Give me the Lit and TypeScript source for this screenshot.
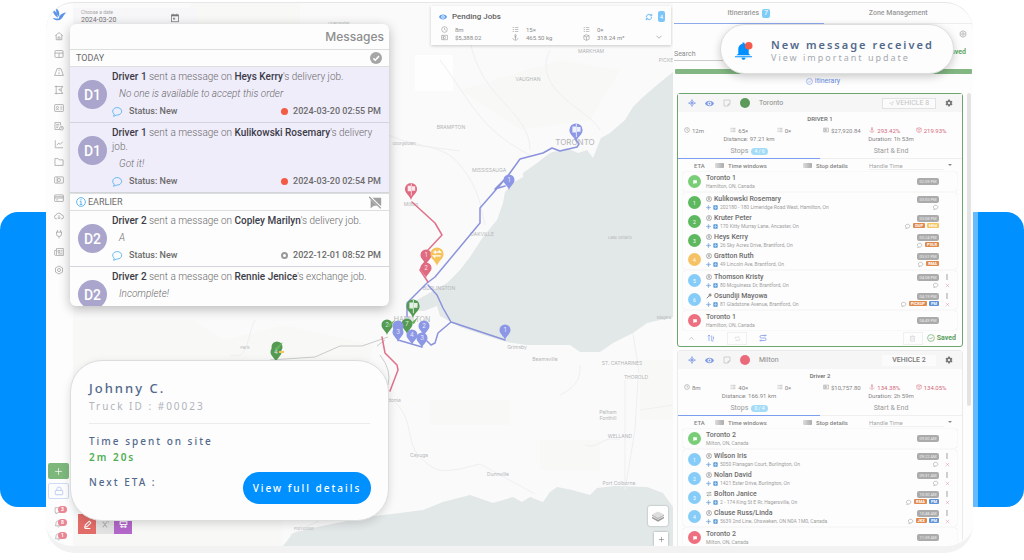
import { LitElement, html, css, svg, nothing } from "lit";
import { customElement, property } from "lit/decorators.js";
import { styleMap } from "lit/directives/style-map.js";

const ICONS: Record<string, unknown> = {
  home: svg`<path d="M2 7.5 8 2.5l6 5M3.500 6.500V14h9V6.500M6.500 14V9.500h3V14"/>`,
  table: svg`<rect x="1.5" y="2.5" width="13" height="11" rx="1.5"/><path d="M1.5 6.5h13M8 6.5v7"/>`,
  road: svg`<path d="M5 2.5h6l4 11H1zM8 4.5v2M8 8.5v3"/>`,
  flagBox: svg`<path d="M3.500 1v14M1 2.500h13.500l-3 2.500v6l3 2.500H1M11.500 8h-4l2-2.500"/>`,
  card: svg`<rect x="1" y="2.5" width="14" height="11" rx="1"/><circle cx="5.5" cy="7" r="1.7"/><path d="M3 11.5c.4-2 4.600-2 5 0M10 6.500h3M10 9.500h3"/>`,
  list: svg`<path d="M10 13.500H1.500v-11h9V7M3.500 5.500h5M3.500 8h4M3.500 10.500h3"/><circle cx="12" cy="11.500" r="3"/><path d="M12 10v1.500h1.500"/>`,
  chart: svg`<path d="M2 2v12h12.500M4.500 10l3-3.500 2.500 2 4-4"/>`,
  folder: svg`<path d="M1.500 13.500v-11h5l1.500 2h6.500v9z"/>`,
  money: svg`<rect x="1" y="3" width="14" height="10" rx="1"/><circle cx="8" cy="8" r="2.500"/><path d="M3.500 8h.1M12.400 8h.1M5 3v10"/>`,
  credit: svg`<rect x="1" y="3" width="14" height="10.500" rx="1"/><path d="M1 6h14M1 8h14M3.500 11h3"/>`,
  cloud: svg`<path d="M5 12.500H4a3 3 0 0 1-.5-6A4.500 4.500 0 0 1 12 6.300a3 3 0 0 1 .3 6.200H11M8 6.500v6M6 10.500l2 2 2-2"/>`,
  plug: svg`<path d="M5.500 1.500V5M10.500 1.500V5M3 5h10M4 5v3a4 4 0 0 0 8 0V5M8 12v3"/>`,
  news: svg`<path d="M4 2.500h11v11H2.500c-2 0-1.500-3-1.500-8h3zM4 5.500v7M6.500 5.500h3v3h-3zM11.500 5.500h2M11.500 8h2M6.500 11h7"/>`,
  gear: svg`<path d="M8 1.500l5.600 3.200v6.600L8 14.500l-5.600-3.200V4.700z"/><circle cx="8" cy="8" r="2.500"/>`,
  cog: svg`<path fill="currentColor" stroke="none" fill-rule="evenodd" d="M6.500 1h3l.5 2 1.500.9 2-.6 1.500 2.600-1.500 1.400v1.500l1.500 1.400-1.500 2.600-2-.6L10 13l-.5 2h-3L6 13l-1.500-.800-2 .6L1 10.200l1.500-1.400V7.300L1 5.900l1.500-2.600 2 .6L6 3zM8 5.800a2.300 2.300 0 1 0 0 4.600 2.300 2.300 0 0 0 0-4.600z"/>`,
  chat: svg`<path d="M3 12.200A6 5 0 1 1 6.500 13.400L2 15z"/>`,
  plus: svg`<path d="M8 2v12M2 8h12"/>`,
  lock: svg`<rect x="2" y="7" width="12" height="7" rx="1"/><path d="M4.500 7V5a3.500 3.500 0 0 1 7 0v2"/>`,
  bubble: svg`<path d="M2 3h12v8.500H7L3.500 14v-2.500H2z"/>`,
  bell: svg`<path d="M2 12h12c-2-1.500-1-4-2-6.500-1.500-3.500-6.500-3.500-8 0C3 8 4 10.500 2 12zM6.500 13.500q1.500 1.500 3 0"/>`,
  calendar: svg`<rect x="2.500" y="3" width="11" height="11"/><path stroke-width="2.500" d="M2.500 4h11"/><path d="M5 1v2M11 1v2M5.500 8h2v2h-2z"/>`,
  eye: svg`<path fill="currentColor" stroke="none" fill-rule="evenodd" d="M0 8c3-6.500 13-6.500 16 0-3 6.500-13 6.500-16 0zm8-3.500a3.500 3.500 0 1 0 0 7 3.500 3.500 0 0 0 0-7zM8 6.300a1.700 1.700 0 1 1 0 3.400 1.700 1.700 0 0 1 0-3.400z"/>`,
  refresh: svg`<path stroke-width="2" d="M2.500 8a5.500 5.500 0 0 1 10-3M13.500 8a5.500 5.500 0 0 1-10 3M13.500 1.500V5.500H9.500M2.500 14.500v-4h4"/>`,
  clock: svg`<circle cx="8" cy="8" r="6.500"/><path d="M8 4v4l3 1.500"/>`,
  checks: svg`<path d="M1.500 3.500h3M6.500 3.500h8M1.500 8h3M6.500 8h8M1.500 12.500h3M6.500 12.500h8"/>`,
  anchor: svg`<circle cx="8" cy="3" r="1.700"/><path d="M8 4.700V14M5 7h6M2 9.500C2.500 12.500 5 14 8 14s5.500-1.500 6-4.500"/>`,
  cube: svg`<path d="M8 1.500l6 2.500v8l-6 2.500L2 12V4zM2 4l6 2.500L14 4M8 6.500v8"/>`,
  down: svg`<path d="M3 5.500l5 5 5-5"/>`,
  up: svg`<path d="M3 10.500l5-5 5 5"/>`,
  target: svg`<circle cx="8" cy="8" r="4"/><circle cx="8" cy="8" r="2" fill="currentColor"/><path stroke-width="2.500" d="M8 1v3M8 12v3M1 8h3M12 8h3"/>`,
  note: svg`<path d="M2 2h12v8l-4 4H2zM10 14v-4h4"/>`,
  send: svg`<path d="M1.500 7.500 14.500 2 9.500 14 7.500 9z"/>`,
  person: svg`<circle cx="8" cy="8" r="6.800"/><circle cx="8" cy="6" r="2"/><path d="M4 12.500c.5-4 7.500-4 8 0"/>`,
  wrench: svg`<path stroke-width="2.200" d="M2 14l6.500-6.500M8.500 7.500c-1.500-3 1-6 4-5l-2 2 1 1.500 2-1.500c1 3-2 5-5 3z"/>`,
  swap: svg`<path stroke-width="1.600" d="M1.500 5h12L10.500 2M14.500 11h-12l3 3"/>`,
  box: svg`<rect x="1" y="1" width="14" height="14" rx="2" fill="currentColor" stroke="none"/><path stroke="#fff" stroke-width="2" d="M8 4v5M4.500 7.500 8 11l3.500-3.500"/>`,
  sort: svg`<path stroke-width="1.600" d="M4 14V2L1.500 4.500M4 2l2.500 2.500M9.500 3v11H13M13 5v6"/>`,
  loop: svg`<path d="M3 9V5h9l-2-2M13 8v4H4l2 2"/>`,
  route: svg`<path stroke-width="1.600" d="M14 3H4.500a2.500 2.500 0 0 0 0 5h7a2.500 2.500 0 0 1 0 5H2M12 1l2 2-2 2M4 11l-2 2 2 2"/>`,
  trash: svg`<path d="M2 4h12M6 4V2h4v2M3.500 4v10h9V4M6.500 7v4M9.500 7v4"/>`,
  done: svg`<circle cx="8" cy="8" r="6.800"/><path d="M5 8l2.200 2.200L11.200 6"/>`,
  kebab: svg`<g fill="currentColor" stroke="none"><circle cx="8" cy="2.500" r="1.900"/><circle cx="8" cy="8" r="1.900"/><circle cx="8" cy="13.500" r="1.900"/></g>`,
  cross: svg`<path d="M2.500 2.500l11 11M13.500 2.500l-11 11"/>`,
  flag: svg`<path fill="currentColor" stroke="none" d="M3 3h10v8H7l-3 3z"/>`,
  layers: svg`<path fill="#999" stroke="none" d="M0 9l8 4 8-4v2l-8 4.500L0 11z"/><path fill="#bbb" stroke="none" d="M0 6l8 4 8-4v2l-8 4.500L0 8z"/><path fill="#ddd" stroke="none" d="M8 2l8 4-8 4-8-4z"/>`,
  edit: svg`<path stroke-width="1.800" d="M3 13l1-4 7-7 3 3-7 7zM3 15h10"/>`,
  tools: svg`<path stroke-width="1.800" d="M3 3l4 5-4 5M11 3l-4 5 4 5M12 2l2 2"/>`,
  grid: svg`<path stroke-width="1.800" d="M2 3h12v5H2zM2 12h12M5 8v6M11 8v6"/>`,
  muted: svg`<path fill="currentColor" stroke="none" d="M2 2h13v10H6l-4 3z"/><path stroke="#fff" stroke-width="3" d="M1 1l14 14"/><path stroke-width="1.500" d="M0 1l14.500 14"/>`,
};

const icon = (name: string, size = 10, color = "currentColor") => svg`
  <svg viewBox="0 0 16 16" width=${size} height=${size} fill="none" stroke="currentColor"
    stroke-width="1.200" style=${styleMap({ color })} aria-hidden="true">${ICONS[name]}</svg>`;

const base = css`
  * { box-sizing: border-box; }
  svg { display: block; flex: none; }
  button, input, select {
    font: inherit; color: inherit; background: none; border: 0; margin: 0; padding: 0;
    border-radius: 0; letter-spacing: inherit; appearance: none;
  }
  h1, h2, h3, p, ul { margin: 0; padding: 0; font-size: inherit; font-weight: inherit; list-style: none; }
`;

type Pin = [number, number, string, string, number?];
const BLUE = "#8c97e6", RED = "#e06a80", GREEN = "#549a52";
const PINS: Pin[] = [
  [576, 130, BLUE, "flag", 1.2], [509, 180, BLUE, "1"], [411, 189, RED, "flag", 1.1],
  [426, 255, RED, "1"], [437, 254, "#f5c35c", "swap", 1.2], [426, 268, RED, "2"],
  [407, 324, GREEN, "7"], [413, 306, GREEN, "flag", 1.2], [387, 325, GREEN, "2"],
  [398, 326, BLUE, ""], [398, 332, BLUE, "3"], [412, 335, BLUE, "4"],
  [424, 326, BLUE, "2"], [422, 338, BLUE, "3"], [505, 330, BLUE, "1"],
  [277, 347, GREEN, ""], [276, 352, GREEN, "4"],
];
const PLACES: [string, number, number, number][] = [
  ["MARKHAM", 591, 53, 5], ["VAUGHAN", 528, 81, 5], ["BRAMPTON", 451, 129, 5],
  ["Georgetown", 404, 145, 4], ["PICKERING", 672, 62, 5], ["TORONTO", 575, 145, 8],
  ["MISSISSAUGA", 489, 172, 5], ["Milton", 411, 206, 5], ["OAKVILLE", 482, 236, 5],
  ["BURLINGTON", 439, 290, 5], ["HAMILTON", 412, 322, 7], ["Grimsby", 517, 349, 5],
  ["Beamsville", 545, 361, 5], ["ST. CATHARINES", 622, 365, 5], ["THOROLD", 636, 379, 5],
  ["Pelham", 608, 414, 5], ["Fonthill", 608, 420, 5], ["WELLAND", 620, 438, 5],
  ["Port Colborne", 619, 485, 5], ["Cayuga", 419, 457, 5], ["Dunnville", 498, 476, 5],
  ["Caledonia", 389, 402, 5], ["Paris", 245, 349, 4], ["Port Dover", 304, 530, 4],
  ["Lake Ontario", 620, 239, 4], ["Orangeville", 339, 25, 4], ["Niagara", 664, 319, 4],
];

@customElement("route-map")
export class RouteMap extends LitElement {
  static styles = [base, css`
    :host { display: block; position: relative; overflow: hidden; background: #fafafa; }
    .canvas { position: absolute; inset: 0; width: 100%; height: 100%; font-family: Inter, sans-serif; }
    .date {
      position: absolute; top: 5px; left: 0; width: 124px; height: 22px; padding: 1px 17px 0 8px;
      display: flex; align-items: flex-start; justify-content: space-between; background: #f7f7f9;
      color: #757575;
    }
    .date svg { margin-top: 4px; }
    .date label { display: block; font-size: 5px; line-height: 7px; color: #a5a5a5; }
    .date input { display: block; width: 60px; font-size: 7px; line-height: 8px; height: 8px; }
    .pending {
      position: absolute; top: 3px; right: 2px; width: 240px; height: 39px; padding: 5px 6px 3px 8px;
      background: #fdfdfd; box-shadow: 0 1px 3px #0003; color: #8a8a8a; font-size: 6px;
    }
    .top { display: flex; align-items: center; gap: 5px; height: 11px; }
    .top h2 { flex: 1; font-size: 8px; font-weight: 500; color: #616161; }
    .pill { background: #7cc5f8; color: #fff; border-radius: 2px; height: 11px; width: 7px; display: grid; place-items: center; font-size: 6px; }
    .row { display: flex; align-items: flex-end; margin: 4px 2px 0; }
    .nums { flex: 1; display: grid; grid-template-columns: 71px 71px 1fr; row-gap: 1px; }
    .nums span { display: flex; align-items: center; gap: 7px; line-height: 7px; }
    .tools { position: absolute; left: 5px; bottom: 12px; display: flex; }
    .tools button { width: 18px; height: 20px; display: grid; place-items: center; color: #fff; }
    .tools .red { background: #e26c68; }
    .tools .gray { background: #e2e2e2; color: #b5b5b5; }
    .tools .violet { background: #b267c9; }
    .zoom { position: absolute; right: 5px; bottom: 0; display: flex; flex-direction: column; align-items: flex-end; gap: 6px; }
    .zoom button { background: #fff; display: grid; place-items: center; width: 14px; height: 14px; box-shadow: 0 0 2px #0005; color: #666; }
    .zoom .big { width: 20px; height: 20px; border-radius: 2px; }
  `];

  private pin([x, y, color, mark, k = 1]: Pin) {
    return svg`<g transform="translate(${x} ${y}) scale(${k})">
      <path fill=${color} d="M0 10C-1 6-5.500 4-5.500 0A5.500 5.500 0 0 1 5.500 0C5.500 4 1 6 0 10Z"/>
      ${mark === "flag" ? svg`<path fill="#fff" opacity=".85" d="M-3-3h3v5h-3zM.8-2.500h3v4h-3z"/><path stroke="#fff" stroke-width=".8" opacity=".8" d="M.3-5v11"/>`
        : mark === "swap" ? svg`<path stroke="#fff" fill="none" d="M-3-1.500h6l-1.500-1.500M3 1.500h-6l1.500 1.500M-1.500-3v3"/>`
        : svg`<text y="2" font-size="6" fill="#fff" opacity=".8" text-anchor="middle">${mark}</text>`}
    </g>`;
  }

  render() {
    return html`
      <svg class="canvas" viewBox="73 3 600 543" preserveAspectRatio="xMaxYMax slice" role="img" aria-label="Route map">
        <g fill="#f8f9f6">
          <path d="M73 320h120l30 20 60-15 90 20-10 60h-290zM560 60l60 10-30 50-70 10-60-40zM540 440h60v30h-60zM430 400h80v25h-80zM640 360h33v60h-33zM190 3h110v22H190zM73 520h210v26H73z"/>
        </g>
        <path fill="#fff" d="M415 55h38v36h-38zM470 270l30 10-20 30z" opacity=".8"/>
        <path fill="#e2e7e7" d="M673 72L657 85L643 97L633 107L625 120L610 133L601 138L593 158L587 150L578 153L567 148L550 153L537 163L523 173L523 177L513 183L505 192L503 203L497 220L483 237L470 257L460 270L447 283L433 291L417 300L409 310L424 311L437 306L440 316L460 327L490 337L507 342L527 345L570 345L580 352L600 352L613 343L633 333L647 323L673 317Z"/>
        <path fill="#e2e7e7" d="M283 546L293 533L317 527L367 517L400 513L423 510L443 502L470 495L493 503L513 497L522 502L530 497L543 502L550 492L557 487L572 490L590 495L597 488L615 486L647 487L663 493L673 507V546Z"/>
        <g fill="none" stroke="#efeff2" stroke-width="1">
          <path d="M380 130c30 20 60 10 80 35s20 40 25 60M440 60c30 40 40 70 90 95M470 40c10 60 60 70 60 110M550 50c-20 40 40 60 50 80M400 143l60 8M395 402c20 20 10 40 25 55s20 15 40 12l20-5 55 30M625 380v110l10-60 3-50M620 440c-20-5-20 10-35 5M640 410l33-5M633 333l6 40M255 320c-10 20-5 40-25 35M380 500c-40 10-60 20-90 35M560 395c20-10 20-20 20-30"/>
        </g>
        <path fill="none" stroke="#c9cccb" d="M270 360l45-3 25-11h22l26-9M385 340l-8 6M380 355q12 15 8 30"/>
        ${PLACES.map(([n, x, y, s]) => svg`<text x=${x} y=${y} font-size=${s} text-anchor="middle" fill="#b4b6b8">${n}</text>`)}
        <g fill="none" stroke-width="1.500" stroke-linejoin="round" stroke-linecap="round">
          <path stroke="#8a93dc" d="M576 140l3 4-2 3-17 4-8-3-9 5-23 6-13 18-27 31v15l-45 54-8 6-20 20v14M505 186l-10 3 12-12M428 285l9 10 6 13 8 14 54 18M451 322l-13 11-3 10-4 2-4-4M398 340l24 7"/>
          <path stroke="#e0718a" d="M412 202l23 21 7 12-14 15M426 260l-6 10 8 12M382 337l3 16 12 12 1 5-8 21"/>
        </g>
        ${PINS.map((p) => this.pin(p))}
        <path fill="#67b35f" d="M274 349l9-7-5 8zM386 326l9-6-5 7zM411 323l7-6-4 7z"/><path fill="#f5c35c" d="M279 351h5v2h-5z"/>
      </svg>
      <div class="date">
        <div><label for="day">Choose a date</label><input id="day" value="2024-03-20" /></div>
        ${icon("calendar", 10, "#777")}
      </div>
      <section class="pending">
        <div class="top">${icon("eye", 8, "#5a9cf0")}<h2>Pending Jobs</h2>${icon("refresh", 8, "#6ebcf5")}<span class="pill">4</span></div>
        <div class="row">
          <div class="nums">
            <span>${icon("clock", 7)}8m</span><span>${icon("checks", 7)}15×</span><span>${icon("checks", 7)}0×</span>
            <span>${icon("money", 7)}$5,388.02</span><span>${icon("anchor", 7)}465.50 kg</span><span>${icon("cube", 7)}318.24 m²</span>
          </div>
          <button aria-label="Expand">${icon("down", 8)}</button>
        </div>
      </section>
      <div class="tools">
        <button class="red" aria-label="Edit">${icon("edit", 9)}</button>
        <button class="gray" aria-label="Tools">${icon("tools", 9)}</button>
        <button class="violet" aria-label="Grid">${icon("grid", 9)}</button>
      </div>
      <div class="zoom">
        <button class="big" aria-label="Layers">${icon("layers", 12)}</button>
        <button aria-label="Zoom in">${icon("plus", 7)}</button>
      </div>`;
  }
}

interface Stop { n: string; c: string; name: string; addr: string; time: string; kind?: string; tags?: [string, string][]; menu?: boolean; }
interface Trip {
  place: string; dot: string; vehicle: string; driver: string; stats: string[]; distance: string; duration: string;
  count: string; start: Stop; groups: Stop[][]; end: Stop; active?: boolean;
}
const OR = "#e08a4e", YE = "#f6c666", BL = "#5f93d3", SKY = "#86ccf8", GR = "#5db85f";
const TRIPS: Trip[] = [
  {
    place: "Toronto", dot: "#5c9a5a", vehicle: "VEHICLE 8", driver: "DRIVER 1", active: true,
    stats: ["12m", "65×", "0×", "$27,920.84", "293.42%", "219.93%"],
    distance: "97.21 km", duration: "1h 53m", count: "4 / 6",
    start: { n: "", c: "#79cd76", name: "Toronto 1", addr: "Hamilton, ON, Canada", time: "02:59 PM" },
    groups: [[
      { n: "1", c: GR, name: "Kulikowski Rosemary", addr: "202180 - 180 Limeridge Road West, Hamilton, On", time: "03:05 PM", tags: [] },
      { n: "2", c: GR, name: "Kruter Peter", addr: "170 Kitty Murray Lane, Ancaster, On", time: "03:08 PM", tags: [["DUP", OR], ["HH4", YE]] },
      { n: "3", c: GR, name: "Heys Kerry", addr: "26 Sky Acres Drive, Brantford, On", time: "03:24 PM", tags: [["PVLR", OR]] },
      { n: "4", c: "#f6c266", name: "Gratton Ruth", addr: "49 Lincoln Ave, Brantford, On", time: "03:51 PM", tags: [["RMA", OR]] },
    ], [
      { n: "5", c: SKY, name: "Thomson Kristy", addr: "80 Mcguiness Dr, Brantford, On", time: "04:08 PM", tags: [], menu: true },
      { n: "6", c: SKY, name: "Osundiji Mayowa", addr: "81 Gladstone Avenue, Brantford, On", time: "04:19 PM", kind: "wrench", tags: [["PICKUP", OR], ["PM", BL]], menu: true },
    ]],
    end: { n: "", c: "#ee6f80", name: "Toronto 1", addr: "Hamilton, ON, Canada", time: "04:49 PM" },
  },
  {
    place: "Milton", dot: "#ea6a7a", vehicle: "VEHICLE 2", driver: "Driver 2",
    stats: ["8m", "40×", "0×", "$10,757.80", "134.38%", "134.05%"],
    distance: "166.91 km", duration: "2h 59m", count: "0 / 4",
    start: { n: "", c: "#79cd76", name: "Toronto 2", addr: "Milton, ON, Canada", time: "09:00 AM" },
    groups: [[
      { n: "1", c: SKY, name: "Wilson Iris", addr: "5050 Flanagan Court, Burlington, On", time: "09:22 AM", tags: [], menu: true },
      { n: "2", c: SKY, name: "Nolan David", addr: "1421 Ester Drive, Burlington, On", time: "09:31 AM", tags: [], menu: true },
      { n: "3", c: SKY, name: "Bolton Janice", addr: "2 - 174 King St E Rr, Hagersville, On", time: "10:30 AM", kind: "swap", tags: [["RMA", OR], ["PM", BL]], menu: true },
      { n: "4", c: SKY, name: "Clause Russ/Linda", addr: "5639 2nd Line, Ohsweken, ON N0A 1M0, Canada", time: "10:48 AM", tags: [["JKX", OR], ["PM", BL]], menu: true },
    ]],
    end: { n: "", c: "#ee6f80", name: "Toronto 2", addr: "Milton, ON, Canada", time: "11:59 AM" },
  },
];

@customElement("trip-card")
export class TripCard extends LitElement {
  @property({ attribute: false }) trip!: Trip;
  static styles = [base, css`
    :host { display: block; border: 1px solid #eaeaea; border-radius: 3px; background: #fdfdfd; color: #858585; font-size: 6px; }
    :host([active]) { border-color: #6ca66c; }
    header { height: 18px; padding: 0 9px 0 10px; display: flex; align-items: center; gap: 9px; background: #f6f6f6; color: #8a8a8a; font-size: 7px; }
    .dot { width: 10px; height: 10px; border-radius: 50%; }
    .place { flex: 1; }
    .vehicle { width: 54px; height: 11px; display: flex; align-items: center; justify-content: center; gap: 2px; background: #fbfbfb; color: #777; font-weight: 500; font-size: 7px; }
    :host([active]) .vehicle { border: 1px solid #e2e2e2; color: #c4c4c4; font-weight: 400; }
    .driver { text-align: center; line-height: 13px; padding-bottom: 1px; color: #6d6d6d; font-weight: 500; }
    .stats { display: grid; grid-template-columns: repeat(6, 1fr); padding: 0 0 0 6px; height: 8px; }
    .stats span { display: flex; align-items: center; gap: 2px; font-size: 6px; }
    .stats .over { color: #d4697c; }
    .halves { display: grid; grid-template-columns: 1fr 1fr; text-align: center; line-height: 10px; }
    .tabs { height: 15px; }
    .tabs button { display: flex; gap: 3px; align-items: center; justify-content: center; font-size: 7px; border-bottom: 1px solid #efefef; color: #999; }
    .tabs .on { border-color: #7d9df0; }
    .count { background: #a4dcf8; color: #fff; border-radius: 4px; padding: 0 3px; font-size: 5px; line-height: 7px; }
    .opts { height: 13px; display: grid; grid-template-columns: 21px 88px 66px 1fr; align-items: center; padding: 0 10px 0 16px; font-weight: 500; }
    .opts label { display: flex; align-items: center; gap: 4px; }
    .opts input { width: 9px; height: 5px; background: linear-gradient(90deg, #ddd, #aaa); border-radius: 1px; }
    .pick { display: flex; align-items: center; }
    .pick select { flex: 1; font-weight: 400; color: #a8a8a8; border-bottom: 1px solid #f0f0f0; }
    .pick i { border: 2px solid transparent; border-top-color: #888; height: 2px; }
    .list { display: flex; flex-direction: column; gap: 2px; padding: 0 5px; }
    .group { border-radius: 2px; box-shadow: 0 0 1px #0003; }
    .stop { height: 19px; padding-left: 5px; display: grid; grid-template-columns: 13px 1fr auto 18px; align-items: center; }
    .num { width: 13px; height: 13px; border-radius: 50%; color: #fff; display: grid; place-items: center; font-size: 5px; }
    .who { padding-left: 5px; }
    .who h3, .who p { display: flex; align-items: center; gap: 2px; white-space: nowrap; }
    .who h3 { font-size: 7px; line-height: 9px; font-weight: 500; color: #6c6c6c; }
    .who p { font-size: 5px; line-height: 7px; color: #a0a0a0; }
    .right { display: flex; flex-direction: column; align-items: flex-end; gap: 1px; }
    .time { background: #ababab; color: #eee; border-radius: 2px; padding: 0 2px; width: 22px; font-size: 4px; line-height: 7px; text-align: center; white-space: nowrap; }
    .tags { display: flex; gap: 2px; align-items: center; height: 6px; }
    .tags b { color: #fff; font-size: 4px; line-height: 5px; padding: 0 2px; border-radius: 1px; font-weight: 700; }
    .acts { display: grid; justify-items: center; gap: 3px; padding-right: 2px; }
    footer { height: 16px; display: flex; align-items: center; gap: 12px; padding: 0 6px 0 10px; color: #999; }
    .cell { width: 20px; height: 13px; border: 1px solid #f0f0f0; display: grid; place-items: center; color: #ccc; }
    .push { margin-left: auto; }
    .saved { display: flex; align-items: center; gap: 2px; margin-left: -8px; color: #5c9e5c; font-weight: 700; font-size: 7px; }
  `];

  private stop(s: Stop, flag = false) {
    return html`<li class="stop">
      <span class="num" style=${styleMap({ background: s.c })}>${flag ? icon("flag", 6) : s.n}</span>
      <div class="who">
        <h3>${flag ? nothing : icon(s.kind ?? "person", 6)}${s.name}</h3>
        <p>${flag ? nothing : html`${icon("target", 5, "#6a9fd8")}${icon("box", 5, "#5b9bd8")}`}${s.addr}</p>
      </div>
      <div class="right"><span class="time">${s.time}</span>
        ${s.tags ? html`<span class="tags">${icon("chat", 6)}${s.tags.map(([t, c]) => html`<b style=${styleMap({ background: c })}>${t}</b>`)}</span>` : nothing}
      </div>
      <div class="acts">${s.menu ? html`${icon("kebab", 6)}${icon("cross", 5, "#e0708a")}` : nothing}</div>
    </li>`;
  }

  render() {
    const t = this.trip;
    const glyphs = ["clock", "checks", "checks", "money", "anchor", "cube"];
    return html`
      <header>
        ${icon("target", 8, "#7f9be8")}${icon("eye", 9, "#7f9be8")}${icon("note", 8, "#bbb")}
        <span class="dot" style=${styleMap({ background: t.dot })}></span>
        <h2 class="place">${t.place}</h2>
        <button class="vehicle">${t.active ? icon("send", 5) : nothing}${t.vehicle}</button>
        ${icon("cog", 8, "#777")}
      </header>
      <div class="driver">${t.driver}</div>
      <div class="stats">${t.stats.map((s, i) => html`<span class=${i > 3 ? "over" : ""}>${icon(glyphs[i], 6)}${s}</span>`)}</div>
      <div class="halves"><span>Distance: ${t.distance}</span><span>Duration: ${t.duration}</span></div>
      <div class="halves tabs"><button class="on">Stops <span class="count">${t.count}</span></button><button>Start &amp; End</button></div>
      <div class="opts">
        <span>ETA</span>
        <label><input type="checkbox" />Time windows</label>
        <label><input type="checkbox" />Stop details</label>
        <label class="pick"><select aria-label="Handle time"><option>Handle Time</option></select><i></i></label>
      </div>
      <div class="list">
        <ul class="group">${this.stop(t.start, true)}</ul>
        ${t.groups.map((g) => html`<ul class="group">${g.map((s) => this.stop(s))}</ul>`)}
        <ul class="group">${this.stop(t.end, true)}</ul>
      </div>
      ${t.active ? html`<footer>
        ${icon("up", 7)}${icon("sort", 8, "#8aa4ea")}<span class="cell">${icon("loop", 7)}</span>${icon("route", 8, "#7f9be8")}
        <button class="cell push" aria-label="Delete">${icon("trash", 7)}</button>
        <span class="saved">${icon("done", 8)}Saved</span>
      </footer>` : nothing}`;
  }
}

interface Msg { d: string; who: string; kind: string; text: string; when?: string; unread?: boolean; }
const MESSAGES: Record<string, Msg[]> = {
  today: [
    { d: "1", who: "Heys Kerry", kind: "delivery", text: "No one is available to accept this order", when: "2024-03-20 02:55 PM", unread: true },
    { d: "1", who: "Kulikowski Rosemary", kind: "delivery", text: "Got it!", when: "2024-03-20 02:54 PM", unread: true },
  ],
  earlier: [
    { d: "2", who: "Copley Marilyn", kind: "delivery", text: "A", when: "2022-12-01 08:52 PM" },
    { d: "2", who: "Rennie Jenice", kind: "exchange", text: "Incomplete!" },
  ],
};
const NAV = ["home", "table", "road", "flagBox", "card", "list", "chart", "folder", "money", "credit", "cloud", "plug", "news", "gear"];

@customElement("app-root")
export class AppRoot extends LitElement {
  static styles = [base, css`
    :host { display: block; font-family: Roboto, sans-serif; background: #fff; overflow: hidden; }
    .stage { display: grid; height: 100vh; min-height: 560px; }
    .band {
      grid-area: 1 / 1; margin: 212px 0 53px; border-radius: 18px;
      background: linear-gradient(90deg, #0090ff calc(100% - 51px), #66bbff 0 calc(100% - 46px), #0090ff 0);
    }
    .frame {
      grid-area: 1 / 1; position: relative; margin: 2px 51px 7px 46px; display: grid;
      grid-template-columns: 27px minmax(0, 1fr) 300px; min-height: 0;
      background: #fdfdfd; border-top: 1px solid #e6e6e6; border-bottom: 7px solid #f2f2f2;
      border-radius: 28px;
    }
    .side { display: flex; flex-direction: column; align-items: center; padding: 5px 2px 3px 0; color: #a2a2a2; border-radius: 28px 0 0 28px; overflow: hidden; }
    .side nav { display: grid; gap: 8px; margin-top: 9px; }
    .side nav a { color: inherit; display: flex; }
    .side .add, .side .lock { width: 21px; height: 16px; border-radius: 2px; display: grid; place-items: center; flex: none; }
    .side .add { margin-top: auto; background: #7db77c; color: #fff; }
    .side .lock { margin: 4px 0 5px; border: 1px solid #cfdcf5; color: #a9c2f2; }
    .alert { display: flex; align-items: center; height: 13px; margin-left: 4px; }
    .alert b { background: #ea8593; color: #fff; border-radius: 4px; font-size: 5px; line-height: 7px; width: 9px; text-align: center; margin: -3px 0 0 -5px; }
    route-map { min-height: 0; }
    .panel { min-height: 0; overflow: hidden; border-radius: 0 28px 28px 0; color: #8c8c8c; font-size: 7px; }
    .tabs { display: grid; grid-template-columns: 1fr 1fr; height: 21px; padding: 0 0 0 1px; }
    .tabs button { display: flex; align-items: center; justify-content: center; gap: 3px; color: #9a9a9a; font-weight: 500; border-bottom: 1px solid #eee; }
    .tabs .on { border-color: #8ea8ec; }
    .tabs b { background: #7dcdf8; color: #fff; padding: 0 2px; line-height: 9px; border-radius: 2px; font-weight: 400; }
    .conf { height: 19px; display: flex; align-items: center; justify-content: flex-end; padding-right: 6px; }
    .find { height: 18px; display: flex; align-items: flex-end; justify-content: space-between; padding: 0 7px 0 1px; }
    .find input { width: 120px; height: 14px; border-bottom: 1px solid #ccc; }
    .find input::placeholder { color: #8c8c8c; opacity: 1; }
    .find span { color: #5fa85f; font-weight: 700; line-height: 18px; }
    .bar { height: 5px; margin: 8px 1px 0 2px; background: #82b682; border-radius: 1px; }
    .itin { width: 100%; height: 14px; display: flex; align-items: center; justify-content: center; gap: 2px; color: #6b8fe8; }
    .scroll { display: grid; grid-template-columns: 1fr 4px; gap: 4px; padding: 5px 2px 0 4px; }
    .cards { display: grid; gap: 3px; }
    .thumb { height: 313px; background: #e3e3e3; border-radius: 2px; }
    .messages {
      position: absolute; left: 24px; top: 21px; width: 319px; height: 282px; overflow: hidden;
      background: #fdfdfd; border-radius: 6px; box-shadow: 0 3px 12px #0004; font-size: 9px; color: #6b6b6b;
    }
    .messages h1 { font: 500 12px/26px Inter, sans-serif; color: #8e8e8e; text-align: right; padding-right: 5px; height: 25px; }
    .sec { height: 18px; display: flex; align-items: center; gap: 2px; padding: 0 7px 0 6px; border: solid #dcdfdc; border-width: 1px 0; }
    .sec svg:last-child { margin-left: auto; }
    .msg { display: grid; grid-template-columns: 29px 1fr; gap: 5px; padding: 3px 8px 4px; line-height: 14px; border-bottom: 1px solid #d4d4dc; }
    .msg.new { background: #f0edfb; }
    .msg p, .msg em { font-size: 10px; font-weight: 300; }
    .msg b { font-weight: 500; color: #3c3c48; }
    .face { width: 29px; height: 29px; margin-top: 10px; border-radius: 50%; background: #a9a5cc; color: #fff; display: grid; place-items: center; font-size: 14px; font-weight: 500; }
    .msg em { display: block; padding: 3px 7px; }
    .meta { display: flex; align-items: center; gap: 5px; font-weight: 500; }
    .meta time { margin-left: auto; display: flex; align-items: center; gap: 5px; }
    .meta i { width: 7px; height: 7px; border-radius: 50%; background: #f45b45; }
    .old .meta i { background: none; border: 2px solid #999; }
    .person {
      position: absolute; left: 24px; bottom: 25px; width: 319px; height: 161px; padding: 17px 18px 16px;
      border: 1px solid #dcdede; border-radius: 32px; background: #fdfdfd; box-shadow: 0 3px 8px #0002;
      font-family: "Noto Sans", sans-serif; letter-spacing: 2px; color: #53698c; font-size: 10px; line-height: 16px; font-weight: 500;
    }
    .person h2 { font-size: 13px; line-height: 20px; }
    .person .id { color: #b0b4bb; font-weight: 400; }
    .person hr { border: 0; border-top: 1px solid #ececec; margin: 9px 0; }
    .person .ok { color: #4caf50; font-weight: 600; }
    .person .foot { display: flex; justify-content: space-between; align-items: flex-start; padding-top: 9px; }
    .cta { width: 128px; height: 32px; margin-top: -2px; margin-right: -1px; border-radius: 16px; background: #0090ff; color: #fff; }
    .toast {
      position: absolute; right: 19px; top: 21px; width: 234px; height: 50px; padding: 3px 0 0 13px; border-radius: 25px;
      display: flex; align-items: center; gap: 18px; background: #fdfdfd; border: 1px solid #dedede; box-shadow: 0 3px 8px #0003;
      font-family: "Noto Sans", sans-serif; letter-spacing: 2px; line-height: 13px;
    }
    .toast h2 { font-size: 11px; font-weight: 600; color: #53698c; }
    .toast p { font-size: 9px; color: #a6aab0; }
  `];

  private msg(m: Msg) {
    return html`<article class="msg ${m.unread ? "new" : "old"}">
      <span class="face">D${m.d}</span>
      <div>
        <p><b>Driver ${m.d}</b> sent a message on <b>${m.who}</b>'s ${m.kind} job.</p>
        <em>${m.text}</em>
        ${m.when ? html`<div class="meta">${icon("chat", 12, "#5ab4f2")}<span>Status: New</span><time><i></i>${m.when}</time></div>` : nothing}
      </div>
    </article>`;
  }

  render() {
    return html`<div class="stage">
      <div class="band"></div>
      <main class="frame">
        <div class="side">
          <svg viewBox="0 0 16 16" width="14" height="14" fill="#5a94ea">
            <path d="M1 2c4 2 5 5 6 9C3 9 1 6 1 2zM5 0c3 3 4 6 3 10C5 7 4 4 5 0zM8 12c0-4 3-6 8-7-1 2-2 2-3 4s-3 5-6 5c-3 0-5-1-6-3 3 1 5 1 7 1z"/>
          </svg>
          <nav>${NAV.map((n) => html`<a href="#${n}" aria-label=${n}>${icon(n, 10)}</a>`)}</nav>
          <button class="add" aria-label="Add">${icon("plus", 9)}</button>
          <button class="lock" aria-label="Lock">${icon("lock", 10)}</button>
          ${[["bubble", "3"], ["bell", "8"], ["bell", "1"]].map(([g, n]) => html`<span class="alert">${icon(g, 9)}<b>${n}</b></span>`)}
        </div>
        <route-map></route-map>
        <aside class="panel">
          <div class="tabs"><button class="on">Itineraries <b>7</b></button><button>Zone Management</button></div>
          <div class="conf">${icon("gear", 8)}</div>
          <div class="find"><input type="search" placeholder="Search" aria-label="Search" /><span>Saved</span></div>
          <div class="bar"></div>
          <button class="itin">${icon("done", 7)}Itinerary</button>
          <div class="scroll">
            <div class="cards">${TRIPS.map((t) => html`<trip-card .trip=${t} ?active=${t.active}></trip-card>`)}</div>
            <div class="thumb"></div>
          </div>
        </aside>

        <section class="messages">
          <h1>Messages</h1>
          <div class="sec">TODAY
            <svg viewBox="0 0 16 16" width="12" height="12"><circle cx="8" cy="8" r="8" fill="#a6a6a6"/><path d="M4.500 8.500 7 11l5-5.500" fill="none" stroke="#fff" stroke-width="2"/></svg>
          </div>
          ${MESSAGES.today.map((m) => this.msg(m))}
          <div class="sec">
            <svg viewBox="0 0 16 16" width="10" height="10" fill="none" stroke="#5ab4f2" stroke-width="1.500"><circle cx="8" cy="8" r="7"/><path d="M6 7h2v5M6 12h4M8 3.500v2"/></svg>
            EARLIER ${icon("muted", 13, "#a0a0a0")}
          </div>
          ${MESSAGES.earlier.map((m) => this.msg(m))}
        </section>

        <section class="person">
          <h2>Johnny C.</h2>
          <p class="id">Truck ID : #00023</p>
          <hr />
          <p>Time spent on site</p>
          <p class="ok">2m 20s</p>
          <div class="foot"><span>Next ETA :</span><button class="cta">View full details</button></div>
        </section>

        <section class="toast" role="status">
          <svg viewBox="0 0 20 20" width="19" height="19"><path fill="#0090ff" d="M9 1.500h2v1.400c3 .6 4.500 2.800 4.500 5.600v5l2 1.500H2.500l2-1.500v-5c0-2.800 1.500-5 4.500-5.600zM1 16h18v1.200H1zM8 17.500h4c0 3-4 3-4 0z"/><circle cx="15.500" cy="5" r="4" fill="#f45b4a"/></svg>
          <div><h2>New message received</h2><p>View important update</p></div>
        </section>
      </main>
    </div>`;
  }
}
